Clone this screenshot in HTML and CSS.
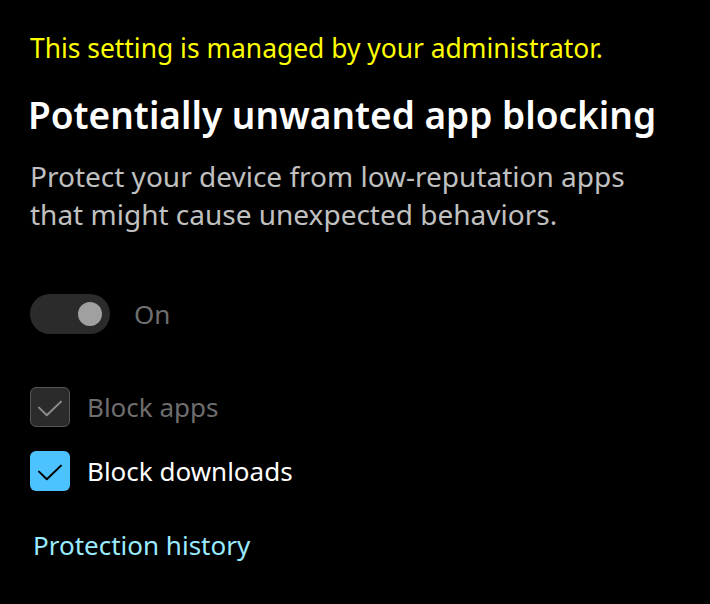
FILE: index.html
```html
<!DOCTYPE html>
<html lang="en">
<head>
<meta charset="utf-8">
<title>Potentially unwanted app blocking</title>
<link rel="stylesheet" href="styles.css">
</head>
<body>
<main class="page">
  <p class="managed">This setting is managed by your administrator.</p>
  <h1 class="title">Potentially unwanted app blocking</h1>
  <p class="desc">Protect your device from low-reputation apps that might cause unexpected behaviors.</p>

  <div class="toggle-row">
    <span class="toggle"><span class="knob"></span></span>
    <span class="toggle-label">On</span>
  </div>

  <div class="checks">
    <label class="check disabled">
      <span class="box">
        <svg viewBox="0 0 20 20"><path d="M4.5 10.3 L8.4 14.1 L15.5 7.3" fill="none" stroke="currentColor" stroke-width="1" stroke-linecap="round" stroke-linejoin="round"/></svg>
      </span>
      <span class="check-label">Block apps</span>
    </label>
    <label class="check on">
      <span class="box">
        <svg viewBox="0 0 20 20"><path d="M4.5 10.3 L8.4 14.1 L15.5 7.3" fill="none" stroke="currentColor" stroke-width="1" stroke-linecap="round" stroke-linejoin="round"/></svg>
      </span>
      <span class="check-label">Block downloads</span>
    </label>
  </div>

  <a class="link" href="#">Protection history</a>
</main>
</body>
</html>
```
FILE: styles.css
```css
html, body {
  margin: 0;
  padding: 0;
  background: #000;
}
body {
  font-family: "Noto Sans", "Open Sans", sans-serif;
  color: #fff;
}
.page {
  display: flex;
  flex-direction: column;
  align-items: flex-start;
  padding: 32px 30px 0 30px;
}
.managed {
  margin: 0;
  color: #ffff00;
  font-size: 26.4px;
  line-height: 32px;
}
.title {
  margin: 29px 0 0 -2px;
  font-size: 37px;
  font-weight: 600;
  line-height: 44px;
}
.desc {
  margin: 20px 0 0 0;
  width: 630px;
  color: #c0c0c0;
  font-size: 28px;
  line-height: 38px;
}
.toggle-row {
  display: flex;
  align-items: center;
  gap: 24px;
  margin-top: 61px;
}
.toggle {
  display: flex;
  align-items: center;
  justify-content: flex-end;
  width: 80px;
  height: 40px;
  border-radius: 20px;
  background: #2b2b2b;
  padding-right: 8px;
  box-sizing: border-box;
}
.knob {
  width: 24px;
  height: 24px;
  border-radius: 50%;
  background: #a0a0a0;
}
.toggle-label {
  color: #6e6e6e;
  font-size: 26px;
}
.checks {
  display: flex;
  flex-direction: column;
  gap: 24px;
  margin-top: 53px;
}
.check {
  display: flex;
  align-items: center;
  gap: 17px;
}
.box {
  display: flex;
  align-items: center;
  justify-content: center;
  width: 40px;
  height: 40px;
  border-radius: 6px;
  box-sizing: border-box;
  overflow: hidden;
}
.box svg { width: 40px; height: 40px; flex: none; }
.check.disabled .box {
  background: #2b2b2b;
  border: 1.5px solid #555;
  color: #8c8c8c;
}
.check.on .box {
  background: #4cc2ff;
  color: #000;
}
.check-label {
  font-size: 26px;
}
.check.disabled .check-label { color: #6e6e6e; }
.check.on .check-label { color: #fff; }
.link {
  margin-top: 36px;
  margin-left: 3px;
  color: #99ebff;
  text-decoration: none;
  font-size: 26px;
}
```
